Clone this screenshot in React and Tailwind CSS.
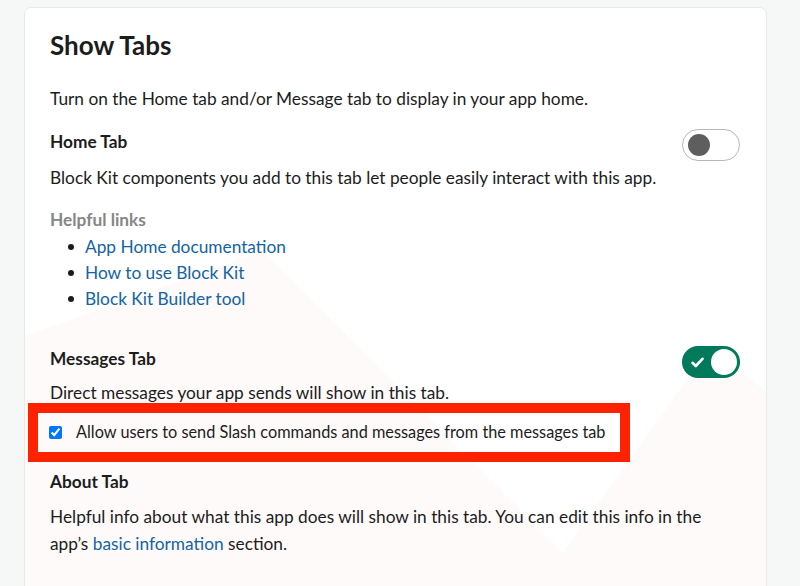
import React, { useState } from 'react';

function Toggle({ on, onChange }) {
  if (on) {
    return (
      <button
        type="button"
        onClick={() => onChange(false)}
        className="shrink-0 w-[58px] h-[32px] rounded-full bg-[#007a5a] flex items-center justify-between pl-[9px] pr-[3px]"
        aria-pressed="true"
      >
        <svg width="13" height="11" viewBox="0 0 13 11" fill="none">
          <path d="M1.5 5.8 L4.8 9 L11.5 1.8" stroke="white" strokeWidth="2.6" strokeLinecap="round" strokeLinejoin="round" />
        </svg>
        <span className="w-[26px] h-[26px] rounded-full bg-white" />
      </button>
    );
  }
  return (
    <button
      type="button"
      onClick={() => onChange(true)}
      className="shrink-0 w-[58px] h-[32px] rounded-full border border-[#b7b7b7] bg-white flex items-center pl-[5px]"
      aria-pressed="false"
    >
      <span className="w-[22px] h-[22px] rounded-full bg-[#5e5d60]" />
    </button>
  );
}

const links = ['App Home documentation', 'How to use Block Kit', 'Block Kit Builder tool'];

export default function App() {
  const [home, setHome] = useState(false);
  const [messages, setMessages] = useState(true);

  return (
    <div className="w-[800px] h-[586px] overflow-hidden bg-[#f6f7f7] pt-[7px] pl-[24px] font-[Lato,sans-serif] text-[#1d1c1d]">
      <div className="relative w-[743px] h-[620px] bg-white border border-[#e8e9e9] rounded-[7px] overflow-hidden">
        <svg className="absolute left-0 top-0 pointer-events-none" width="743" height="620" viewBox="24 7 743 620">
          <polygon points="24,335 262,250 610,600 24,600" fill="#fefafa" />
          <polygon points="527,600 710,345 767,392 767,600" fill="#fefafa" />
        </svg>

        <div className="relative px-[25px] pt-[21px]">
          <h1 className="text-[26px] leading-[32px] font-bold">Show Tabs</h1>

          <p className="mt-[25px] text-[17.3px] leading-[26px]">
            Turn on the Home tab and/or Message tab to display in your app home.
          </p>

          <div className="mt-[17px] flex items-center justify-between pr-[1px]">
            <h2 className="text-[17.3px] leading-[24px] font-bold -mt-[6px]">Home Tab</h2>
            <Toggle on={home} onChange={setHome} />
          </div>
          <p className="mt-[4px] text-[17.3px] leading-[26px]">
            Block Kit components you add to this tab let people easily interact with this app.
          </p>

          <div className="mt-[16px] text-[17.3px] leading-[26px] font-bold text-[#868686]">Helpful links</div>
          <ul className="mt-[1px]">
            {links.map((l) => (
              <li key={l} className="flex items-center text-[17.3px] leading-[26px]">
                <span className="ml-[18px] w-[6px] h-[6px] rounded-full bg-[#1d1c1d]" />
                <a href="#" className="ml-[11px] text-[#1264a3]">{l}</a>
              </li>
            ))}
          </ul>

          <div className="mt-[34px] flex items-center justify-between pr-[1px]">
            <h2 className="text-[17.3px] leading-[24px] font-bold -mt-[6px]">Messages Tab</h2>
            <Toggle on={messages} onChange={setMessages} />
          </div>
          <p className="mt-[3px] text-[17.3px] leading-[24px]">
            Direct messages your app sends will show in this tab.
          </p>

          <label className="-mt-[2px] -ml-[22px] w-[602px] h-[59px] border-[10px] border-[#ff2200] flex items-center pl-[11px] text-[16.3px] whitespace-nowrap">
            <input type="checkbox" defaultChecked className="w-[13px] h-[13px] m-0 accent-[#0075ff]" />
            <span className="ml-[14px]">Allow users to send Slash commands and messages from the messages tab</span>
          </label>

          <h2 className="mt-[8px] text-[17.3px] leading-[24px] font-bold">About Tab</h2>
          <p className="mt-[9px] max-w-[680px] text-[17.3px] leading-[27px]">
            Helpful info about what this app does will show in this tab. You can edit this info in the
            app’s <a href="#" className="text-[#1264a3]">basic information</a> section.
          </p>
        </div>
      </div>
    </div>
  );
}
